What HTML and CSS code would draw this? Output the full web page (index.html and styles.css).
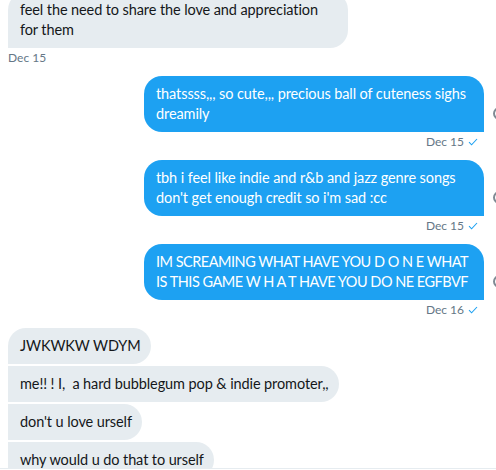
FILE: index.html
```html
<!DOCTYPE html>
<html>
<head>
<meta charset="utf-8">
<link rel="stylesheet" href="styles.css">
</head>
<body>
<div class="page">
  <div class="chat">
    <div class="list">
      <div class="group recv">
        <div class="msg"><div class="bubble last">feel the need to share the love and appreciation for them</div></div>
        <div class="time">Dec 15</div>
      </div>

      <div class="group sent">
        <div class="msg"><div class="bubble">thatssss,,, so cute,,, precious ball of cuteness sighs dreamily</div><span class="more"></span></div>
        <div class="time">Dec 15 <svg class="check" viewBox="0 0 10 8" width="10" height="8"><path d="M1 4.2 L3.6 6.8 L9 1" fill="none" stroke="#1da1f2" stroke-width="1.1"/></svg></div>
      </div>

      <div class="group sent">
        <div class="msg"><div class="bubble">tbh i feel like indie and r&amp;b and jazz genre songs don't get enough credit so i'm sad :cc</div><span class="more"></span></div>
        <div class="time">Dec 15 <svg class="check" viewBox="0 0 10 8" width="10" height="8"><path d="M1 4.2 L3.6 6.8 L9 1" fill="none" stroke="#1da1f2" stroke-width="1.1"/></svg></div>
      </div>

      <div class="group sent">
        <div class="msg"><div class="bubble caps">IM SCREAMING WHAT HAVE YOU D O N E WHAT<br>IS THIS GAME W H A T HAVE YOU DO NE EGFBVF</div><span class="more"></span></div>
        <div class="time">Dec 16 <svg class="check" viewBox="0 0 10 8" width="10" height="8"><path d="M1 4.2 L3.6 6.8 L9 1" fill="none" stroke="#1da1f2" stroke-width="1.1"/></svg></div>
      </div>

      <div class="group recv">
        <div class="msg"><div class="bubble first">JWKWKW WDYM</div></div>
        <div class="msg"><div class="bubble mid">me!! ! I,  a hard bubblegum pop &amp; indie promoter,,</div></div>
        <div class="msg"><div class="bubble mid">don't u love urself</div></div>
        <div class="msg"><div class="bubble mid">why would u do that to urself</div></div>
      </div>
    </div>
  </div>
  <div class="composer"></div>
</div>
</body>
</html>
```

FILE: styles.css
```css
html, body {
  margin: 0;
  padding: 0;
  background: #ffffff;
}
body {
  width: 496px;
  height: 470px;
  overflow: hidden;
  font-family: "Lato", "Noto Sans", sans-serif;
  color: #14171a;
}
.page {
  display: flex;
  flex-direction: column;
  height: 470px;
}
.chat {
  height: 468px;
  overflow: hidden;
  flex: none;
}
.list {
  margin-top: -8px;
  padding: 0 12px 0 8px;
  display: flex;
  flex-direction: column;
}
.group {
  display: flex;
  flex-direction: column;
}
.msg {
  display: flex;
  align-items: flex-start;
}
.recv .msg {
  justify-content: flex-start;
}
.recv .msg + .msg {
  margin-top: 2px;
}
.sent .msg {
  justify-content: flex-end;
  margin-right: -29px;
}
.bubble {
  max-width: 318px;
  padding: 8px 10px 8px 12px;
  font-size: 14.5px;
  letter-spacing: -0.1px;
  line-height: 20px;
  white-space: pre-wrap;
  border-radius: 18px;
}
.bubble.caps {
  width: 318px;
  box-sizing: content-box;
  letter-spacing: -0.5px;
  white-space: nowrap;
}
.recv .bubble {
  background: #e6ecf0;
  color: #14171a;
}
.recv .bubble.last {
  border-bottom-left-radius: 0;
}
.recv .bubble.first {
  border-bottom-left-radius: 0;
}
.recv .bubble.mid {
  border-top-left-radius: 0;
  border-bottom-left-radius: 0;
}
.sent .bubble {
  background: #1da1f2;
  color: #ffffff;
  border-bottom-right-radius: 0;
}
.more {
  flex: none;
  width: 20px;
  height: 13px;
  margin-left: 9px;
  margin-top: 31px;
  border: 2px solid #7f8a94;
  border-radius: 7px;
  box-sizing: border-box;
}
.time {
  font-size: 12px;
  line-height: 16px;
  padding-top: 2px;
  margin-bottom: 10px;
  color: #657786;
  display: flex;
  align-items: center;
  gap: 4px;
}
.sent .time {
  justify-content: flex-end;
  padding-right: 6px;
}
.check {
  display: block;
}
.composer {
  flex: none;
  height: 1px;
  background: #e6ecf0;
  border-bottom: 1px solid #ffffff;
}
```
